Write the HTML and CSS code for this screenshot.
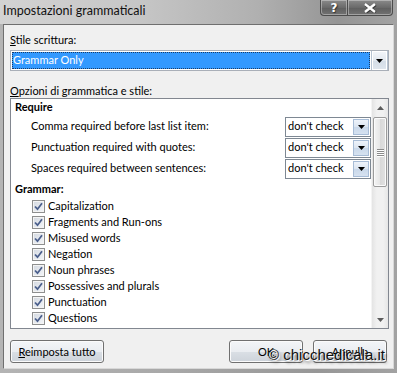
FILE: index.html
```html
<!DOCTYPE html>
<html lang="it">
<head>
<meta charset="utf-8">
<title>Impostazioni grammaticali</title>
<link rel="stylesheet" href="styles.css">
</head>
<body>
<div class="window">
  <div class="titlebar">
    <span class="title">Impostazioni grammaticali</span>
    <div class="caption">
      <div class="cbtn help">?</div>
      <div class="cbtn close">
        <svg width="14" height="10" viewBox="0 0 14 10"><path d="M2 1 L12 9 M12 1 L2 9" stroke="#3a3a3a" stroke-width="3.4" fill="none" transform="translate(0.5,0.6)"/><path d="M2 1 L12 9 M12 1 L2 9" stroke="#fff" stroke-width="2.4" fill="none"/></svg>
      </div>
    </div>
  </div>

  <div class="client">
    <div class="label"><u>S</u>tile scrittura:</div>
    <div class="combo">
      <div class="combo-field"><span class="selected">Grammar Only</span></div>
      <div class="combo-btn">
        <svg width="7" height="4" viewBox="0 0 7 4"><path d="M0 0 H7 L3.5 4 Z" fill="#000"/></svg>
      </div>
    </div>

    <div class="label label-gap"><u>O</u>pzioni di grammatica e stile:</div>
    <div class="listbox">
      <div class="list-content">
        <div class="group">Require</div>
        <div class="opt-row">
          <span class="opt-text">Comma required before last list item:</span>
          <div class="dd"><span class="dd-text">don't check</span><div class="dd-btn"><svg width="7" height="4" viewBox="0 0 7 4"><path d="M0 0 H7 L3.5 4 Z" fill="#000"/></svg></div></div>
        </div>
        <div class="opt-row">
          <span class="opt-text">Punctuation required with quotes:</span>
          <div class="dd"><span class="dd-text">don't check</span><div class="dd-btn"><svg width="7" height="4" viewBox="0 0 7 4"><path d="M0 0 H7 L3.5 4 Z" fill="#000"/></svg></div></div>
        </div>
        <div class="opt-row">
          <span class="opt-text">Spaces required between sentences:</span>
          <div class="dd"><span class="dd-text">don't check</span><div class="dd-btn"><svg width="7" height="4" viewBox="0 0 7 4"><path d="M0 0 H7 L3.5 4 Z" fill="#000"/></svg></div></div>
        </div>
        <div class="group group-grammar">Grammar:</div>
        <div class="chk-row"><span class="cb"><svg width="11" height="11" viewBox="0 0 11 11"><path d="M2 5.5 L4.5 8.2 L9 2.3" stroke="#4b5f8c" stroke-width="1.8" fill="none"/></svg></span><span class="chk-text">Capitalization</span></div>
        <div class="chk-row"><span class="cb"><svg width="11" height="11" viewBox="0 0 11 11"><path d="M2 5.5 L4.5 8.2 L9 2.3" stroke="#4b5f8c" stroke-width="1.8" fill="none"/></svg></span><span class="chk-text">Fragments and Run-ons</span></div>
        <div class="chk-row"><span class="cb"><svg width="11" height="11" viewBox="0 0 11 11"><path d="M2 5.5 L4.5 8.2 L9 2.3" stroke="#4b5f8c" stroke-width="1.8" fill="none"/></svg></span><span class="chk-text">Misused words</span></div>
        <div class="chk-row"><span class="cb"><svg width="11" height="11" viewBox="0 0 11 11"><path d="M2 5.5 L4.5 8.2 L9 2.3" stroke="#4b5f8c" stroke-width="1.8" fill="none"/></svg></span><span class="chk-text">Negation</span></div>
        <div class="chk-row"><span class="cb"><svg width="11" height="11" viewBox="0 0 11 11"><path d="M2 5.5 L4.5 8.2 L9 2.3" stroke="#4b5f8c" stroke-width="1.8" fill="none"/></svg></span><span class="chk-text">Noun phrases</span></div>
        <div class="chk-row"><span class="cb"><svg width="11" height="11" viewBox="0 0 11 11"><path d="M2 5.5 L4.5 8.2 L9 2.3" stroke="#4b5f8c" stroke-width="1.8" fill="none"/></svg></span><span class="chk-text">Possessives and plurals</span></div>
        <div class="chk-row"><span class="cb"><svg width="11" height="11" viewBox="0 0 11 11"><path d="M2 5.5 L4.5 8.2 L9 2.3" stroke="#4b5f8c" stroke-width="1.8" fill="none"/></svg></span><span class="chk-text">Punctuation</span></div>
        <div class="chk-row"><span class="cb"><svg width="11" height="11" viewBox="0 0 11 11"><path d="M2 5.5 L4.5 8.2 L9 2.3" stroke="#4b5f8c" stroke-width="1.8" fill="none"/></svg></span><span class="chk-text">Questions</span></div>
        <div class="chk-row"><span class="cb"></span></div>
      </div>
      <div class="scrollbar">
        <div class="sb-arrow"><svg width="7" height="4" viewBox="0 0 7 4"><path d="M0 4 H7 L3.5 0 Z" fill="#5c5c5c"/></svg></div>
        <div class="sb-track">
          <div class="sb-thumb"><span class="grip"></span><span class="grip"></span><span class="grip"></span><span class="grip"></span></div>
        </div>
        <div class="sb-arrow"><svg width="7" height="4" viewBox="0 0 7 4"><path d="M0 0 H7 L3.5 4 Z" fill="#5c5c5c"/></svg></div>
      </div>
    </div>

    <div class="buttons">
      <button class="btn btn-reset"><u>R</u>eimposta tutto</button>
      <button class="btn btn-ok">OK</button>
      <button class="btn btn-cancel">Annulla</button>
    </div>
  </div>

  <div class="watermark">© chicchedicala.it</div>
</div>
</body>
</html>
```
FILE: styles.css
```css
* { box-sizing: border-box; }

html, body {
  margin: 0;
  padding: 0;
  width: 397px;
  height: 373px;
  overflow: hidden;
}

body {
  font-family: Lato, "Liberation Sans", sans-serif;
  font-size: 11px;
  color: #000;
  background: #a4a4a4;
}

.window {
  position: relative;
  display: flex;
  flex-direction: column;
  width: 397px;
  height: 373px;
  background: linear-gradient(to right, #b4b4b4 0%, #a9a9a9 40%, #979797 80%, #a2a2a2 100%);
}

/* ---------- title bar ---------- */
.titlebar {
  height: 24px;
  flex: none;
  display: flex;
  justify-content: space-between;
  align-items: flex-start;
  padding-left: 3px;
  background: linear-gradient(to right, #d3d3d3 0%, #c6c6c6 35%, #b0b0b0 65%, #959595 85%, #a3a3a3 100%);
}

.title {
  font-size: 12.5px;
  line-height: 16px;
  margin-top: 3px;
  color: #111;
}

.caption {
  display: flex;
  margin-right: 4px;
}

.cbtn {
  height: 16px;
  display: flex;
  align-items: center;
  justify-content: center;
  border: 1px solid #4c4c4c;
  border-top: none;
  background: linear-gradient(#8a8a8a, #6a6a6a 50%, #5e5e5e 51%, #727272);
  box-shadow: inset 0 0 0 1px rgba(255,255,255,0.35);
  color: #fff;
}

.help {
  width: 27px;
  border-bottom-left-radius: 4px;
  border-right: none;
  font-family: "DejaVu Sans", sans-serif;
  font-weight: bold;
  font-size: 12px;
  text-shadow: 1px 1px 1px #333;
}

.close {
  width: 46px;
  border-bottom-right-radius: 4px;
}

/* ---------- client ---------- */
.client {
  flex: 1;
  margin: 0 3px 4px 3px;
  border: 1px solid #6f6f6f;
  border-right-color: #d8d8d8;
  border-bottom-color: #d8d8d8;
  background: #f0f0f0;
  padding: 7px 3px 0 6px;
  display: flex;
  flex-direction: column;
}

.label {
  height: 15px;
  line-height: 15px;
}

.label-gap { margin-top: 12px; }

/* ---------- main combo ---------- */
.combo {
  margin-top: 3px;
  width: 379px;
  height: 21px;
  border: 1px solid #a9afb8;
  background: #fff;
  display: flex;
  padding: 0 0 0 1px;
}

.combo-field {
  flex: 1;
  padding: 1px 1px 1px 0;
}

.selected {
  display: block;
  height: 17px;
  line-height: 16px;
  background: #3399ff;
  color: #fff;
  padding-left: 1px;
  outline: 1px dotted #1d3d66;
  outline-offset: -1px;
}

.combo-btn {
  width: 17px;
  display: flex;
  align-items: center;
  justify-content: center;
  border: 1px solid #b6c3d2;
  border-top: none;
  border-bottom: none;
  background: linear-gradient(#f3f6fa, #e2e8ef 50%, #d4dde7 51%, #dfe6ee);
  box-shadow: inset 0 0 0 1px #fff;
  padding-top: 1px;
}

/* ---------- listbox ---------- */
.listbox {
  width: 379px;
  height: 231px;
  border: 1px solid #828790;
  background: #fff;
  display: flex;
  flex: none;
}

.list-content {
  flex: 1;
  overflow: hidden;
  display: flex;
  flex-direction: column;
}

.group {
  flex: none;
  height: 17px;
  line-height: 16px;
  padding-left: 4px;
  font-weight: bold;
}

.group-grammar {
  margin-top: 2px;
}

.opt-row {
  flex: none;
  height: 21px;
  display: flex;
  align-items: center;
  padding-left: 20px;
}

.opt-text {
  flex: 1;
  padding-bottom: 2px;
}

.dd {
  width: 86px;
  height: 20px;
  margin-top: 1px;
  border: 1px solid #7e8893;
  display: flex;
  background: #fff;
}

.dd-text {
  flex: 1;
  padding-left: 2px;
  line-height: 16px;
}

.dd-btn {
  width: 16px;
  margin: 1px;
  display: flex;
  align-items: center;
  justify-content: center;
  border: 1px solid #a7bcd6;
  background: linear-gradient(#eef3fa, #dbe5f1 50%, #c9d8ea 51%, #d6e2f0);
}

.chk-row {
  flex: none;
  height: 16px;
  display: flex;
  align-items: center;
  padding-left: 21px;
}

.cb {
  flex: none;
  width: 13px;
  height: 13px;
  border: 1px solid #8e8f8f;
  background: linear-gradient(135deg, #d3d8e0, #f4f6f9);
  box-shadow: inset 0 0 0 1px #f4f4f4;
  display: flex;
  align-items: center;
  justify-content: center;
  margin-right: 3px;
}

.chk-text { padding-bottom: 2px; }

/* ---------- scrollbar ---------- */
.scrollbar {
  width: 17px;
  flex: none;
  display: flex;
  flex-direction: column;
  background: linear-gradient(to right, #e4e4e4, #f1f1f1 30%, #f1f1f1 70%, #e6e6e6);
  border-left: 1px solid #f4f4f4;
}

.sb-arrow {
  height: 17px;
  flex: none;
  display: flex;
  align-items: center;
  justify-content: center;
}

.sb-track {
  flex: 1;
  padding: 1px 1px 0 1px;
}

.sb-thumb {
  height: 70px;
  border: 1px solid #9b9b9b;
  border-radius: 2px;
  background: linear-gradient(to right, #f4f4f4, #e6e6e6 50%, #d8d8d8 51%, #e2e2e2);
  box-shadow: inset 0 0 0 1px #fbfbfb;
  display: flex;
  flex-direction: column;
  align-items: center;
  justify-content: center;
  gap: 1px;
}

.grip {
  width: 7px;
  height: 1px;
  background: #8a8a8a;
  box-shadow: 0 1px 0 #fff;
}

/* ---------- buttons ---------- */
.buttons {
  margin-top: 11px;
  display: flex;
  padding-right: 3px;
}

.btn {
  height: 23px;
  font-family: Lato, "Liberation Sans", sans-serif;
  font-size: 11px;
  color: #000;
  border: 1px solid #707070;
  border-radius: 3px;
  background: linear-gradient(#f3f5f8, #eaedf1 50%, #dadfe5 51%, #cdd3da);
  box-shadow: inset 0 0 0 1px #fbfbfb;
  padding: 0 0 1px 0;
}

.btn-reset { width: 94px; }

.btn-ok {
  width: 74px;
  margin-left: auto;
  margin-right: 10px;
}

.btn-cancel { width: 74px; }

/* ---------- watermark overlay ---------- */
.watermark {
  position: absolute;
  left: 268px;
  top: 346px;
  font-family: "Liberation Sans", Arial, sans-serif;
  font-size: 15px;
  line-height: 18px;
  color: #111;
  text-shadow: 1px 1px 0 #fff, 2px 3px 3px rgba(0,0,0,0.45);
  white-space: nowrap;
}
```
